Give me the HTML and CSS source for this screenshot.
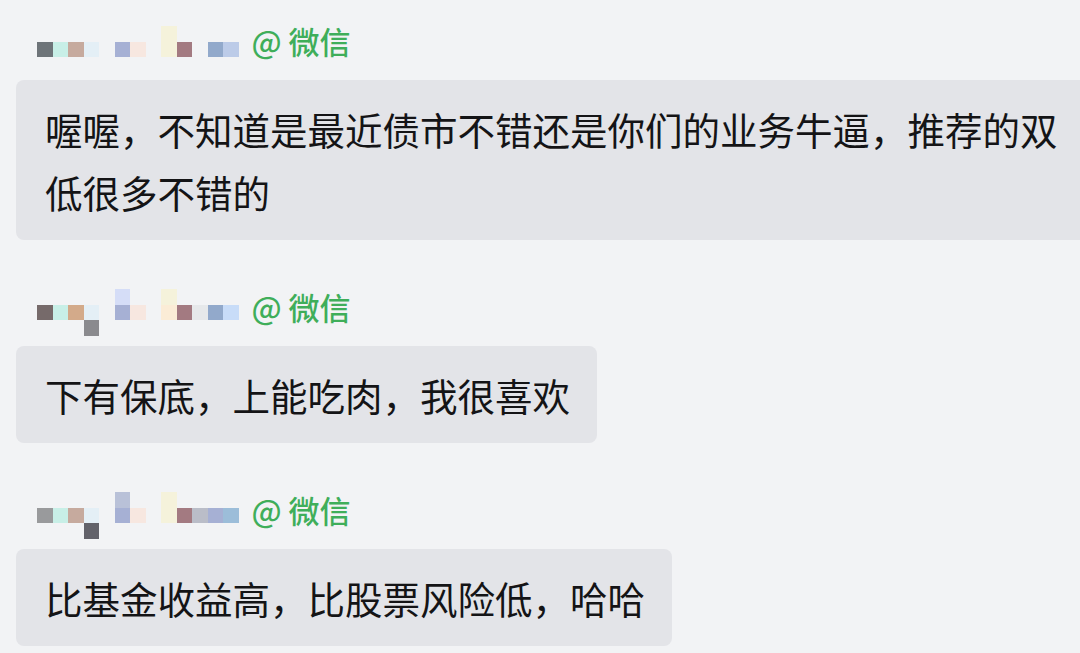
FILE: index.html
```html
<!DOCTYPE html>
<html lang="zh-CN">
    <head>
        <meta charset="UTF-8" />
        <meta name="viewport" content="width=device-width, initial-scale=1.0" />
        <title>留言</title>
        <link rel="stylesheet" href="styles.css">
    </head>
    <body>
        <div class="thread">
            <div class="msg">
                <div class="meta">
                    <div class="mosaic low">
                        <i class="c1 k-slate"></i>
                        <i class="c2 k-mint"></i>
                        <i class="c3 k-tan"></i>
                        <i class="c4 k-ice"></i>
                        <i class="c6 k-lav"></i>
                        <i class="c7 k-blush"></i>
                        <i class="c9 tall k-cream"></i>
                        <i class="c10 k-plum"></i>
                        <i class="c12 k-steel"></i>
                        <i class="c13 k-sky"></i>
                    </div>
                    <span class="source">@ 微信</span>
                </div>
                <div class="bubble wide">喔喔，不知道是最近债市不错还是你们的业务牛逼，推荐的双低很多不错的</div>
            </div>

            <div class="msg">
                <div class="meta">
                    <div class="mosaic">
                        <i class="c1 k-mauve"></i>
                        <i class="c2 k-mint"></i>
                        <i class="c3 k-caramel"></i>
                        <i class="c4 k-ice"></i>
                        <i class="c4 dn k-ash"></i>
                        <i class="c6 up k-periwinkle"></i>
                        <i class="c6 k-lav"></i>
                        <i class="c7 k-blush"></i>
                        <i class="c9 up k-cream"></i>
                        <i class="c9 k-peach"></i>
                        <i class="c10 k-plum"></i>
                        <i class="c11 k-smoke"></i>
                        <i class="c12 k-steel"></i>
                        <i class="c13 k-baby"></i>
                    </div>
                    <span class="source">@ 微信</span>
                </div>
                <div class="bubble">下有保底，上能吃肉，我很喜欢</div>
            </div>

            <div class="msg">
                <div class="meta">
                    <div class="mosaic">
                        <i class="c1 k-grey"></i>
                        <i class="c2 k-mint"></i>
                        <i class="c3 k-tan"></i>
                        <i class="c4 k-ice"></i>
                        <i class="c4 dn k-ink"></i>
                        <i class="c6 up k-fog"></i>
                        <i class="c6 k-lav"></i>
                        <i class="c7 k-blush"></i>
                        <i class="c9 tall k-cream"></i>
                        <i class="c10 k-plum"></i>
                        <i class="c11 k-silver"></i>
                        <i class="c12 k-lav"></i>
                        <i class="c13 k-powder"></i>
                    </div>
                    <span class="source">@ 微信</span>
                </div>
                <div class="bubble">比基金收益高，比股票风险低，哈哈</div>
            </div>
        </div>
    </body>
</html>
```

FILE: styles.css
```css
html,
body {
    margin: 0;
    height: 100%;
    overflow: hidden;
    background-color: #f2f3f5;
}

body {
    font-family: "Noto Sans CJK SC", "Noto Sans", sans-serif;
    color: #141416;
}

.thread {
    padding: 20px 0 0 16px;
}

.msg {
    margin-bottom: 46px;
}

.msg:last-child {
    margin-bottom: 0;
}

.meta {
    height: 40px;
    margin-bottom: 20px;
    display: flex;
    align-items: center;
}

/* pixelated nickname */
.mosaic {
    align-self: flex-start;
    margin: 3px 0 0 21px;
    display: grid;
    grid-template-columns: repeat(13, 15.5px);
    grid-template-rows: repeat(3, 15.5px);
    height: 46.5px;
}

.mosaic.low {
    margin-top: 6px;
}

.mosaic i {
    grid-row: 2;
}

.mosaic i.up {
    grid-row: 1;
}

.mosaic i.dn {
    grid-row: 3;
}

.mosaic i.tall {
    grid-row: 1 / 3;
}

.c1 { grid-column: 1; }
.c2 { grid-column: 2; }
.c3 { grid-column: 3; }
.c4 { grid-column: 4; }
.c6 { grid-column: 6; }
.c7 { grid-column: 7; }
.c9 { grid-column: 9; }
.c10 { grid-column: 10; }
.c11 { grid-column: 11; }
.c12 { grid-column: 12; }
.c13 { grid-column: 13; }

.k-slate { background-color: #6e7479; }
.k-mint { background-color: #c8efe7; }
.k-tan { background-color: #c6aa9e; }
.k-ice { background-color: #e4eff6; }
.k-lav { background-color: #a6b0d4; }
.k-blush { background-color: #f7e7e0; }
.k-cream { background-color: #f5f2db; }
.k-plum { background-color: #a37a81; }
.k-steel { background-color: #92a9cb; }
.k-sky { background-color: #bccbe8; }
.k-mauve { background-color: #766a6a; }
.k-caramel { background-color: #d3aa8a; }
.k-ash { background-color: #8a8a8e; }
.k-periwinkle { background-color: #d5ddf7; }
.k-peach { background-color: #fbecd6; }
.k-smoke { background-color: #e6e8ea; }
.k-baby { background-color: #c8dcf8; }
.k-grey { background-color: #999a9c; }
.k-ink { background-color: #62626a; }
.k-fog { background-color: #b9c1d8; }
.k-silver { background-color: #babdc8; }
.k-powder { background-color: #9cbdd9; }

.source {
    margin-left: 13px;
    font-size: 31px;
    font-weight: 500;
    color: #3fae5a;
    white-space: nowrap;
}

.bubble {
    display: inline-block;
    max-width: 1018px;
    padding: 17px 27px 17px 29px;
    border-radius: 8px;
    background-color: #e3e4e8;
    font-size: 37.5px;
    line-height: 63px;
}

.bubble.wide {
    width: 1018px;
}
```
